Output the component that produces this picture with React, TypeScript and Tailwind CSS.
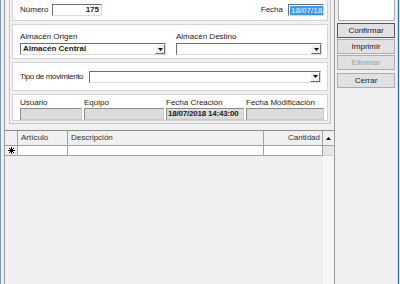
import React from "react";

function DropBtn() {
  return (
    <div className="h-full w-[10px] flex items-center justify-center bg-[#f0f0f0] border-t border-l border-t-white border-l-white border-r border-b border-r-[#6d6d6d] border-b-[#6d6d6d]">
      <svg width="5" height="3" viewBox="0 0 5 3">
        <path d="M0 0H5L2.5 3Z" fill="#000" />
      </svg>
    </div>
  );
}

function Combo({ className, text, bold }: { className: string; text?: string; bold?: boolean }) {
  return (
    <div className={"flex h-[12px] bg-white border border-t-[#6d6d6d] border-l-[#6d6d6d] border-r-[#dcdcdc] border-b-[#dcdcdc] " + className}>
      <div className={"flex-1 pl-[2px] leading-[10px] " + (bold ? "font-bold" : "")}>{text}</div>
      <div className="h-full">
        <DropBtn />
      </div>
    </div>
  );
}

function Field({ className, text }: { className: string; text?: string }) {
  return (
    <div className={"h-[12px] overflow-hidden bg-[#dcdcdc] border border-t-[#8a8a8a] border-l-[#8a8a8a] border-r-[#c8c8c8] border-b-[#c8c8c8] leading-[10px] pl-[1px] font-bold tracking-[-0.2px] " + className}>
      {text}
    </div>
  );
}

function Btn({ label, disabled, def }: { label: string; disabled?: boolean; def?: boolean }) {
  return (
    <div
      className={
        "h-[15px] w-[58px] flex items-center justify-center bg-[#e1e1e1] border " +
        (def ? "border-[#5a5a5a] " : "border-[#adadad] ") +
        (disabled ? "text-[#a0a0a0]" : "text-[#1a1a1a]")
      }
    >
      {label}
    </div>
  );
}

export default function App() {
  return (
    <div className="w-[400px] h-[284px] bg-[#f0f0f0] flex overflow-hidden whitespace-nowrap text-[8px] text-[#1a1a1a] font-['Liberation_Sans',Arial,sans-serif]">
      <div className="w-[1px] h-full bg-[#7d95ad]" />
      <div className="w-[3px] h-full bg-[#eef1f4]" />
      {/* left column */}
      <div className="w-[330px] h-full flex flex-col border-l border-[#9a9a9a]">
        {/* form frame */}
        <div className="h-[127px] pl-[4px]">
          <div className="w-[322px] h-[124px] border-x border-b border-[#c4c4c4] px-[2px] flex flex-col gap-[3px]">
            {/* panel 1 */}
            <div className="h-[21px] bg-white border-x border-b border-[#d4d4d4] flex items-center pl-[7px] pr-[3px]">
              <span className="w-[32px]">Número</span>
              <div className="w-[50px] h-[12px] border border-t-[#6d6d6d] border-l-[#6d6d6d] border-r-[#dcdcdc] border-b-[#dcdcdc] bg-white text-right pr-[2px] leading-[10px] font-bold">
                175
              </div>
              <div className="flex-1" />
              <span className="mr-[5px]">Fecha</span>
              <div className="w-[36px] h-[12px] border border-t-[#6d6d6d] border-l-[#6d6d6d] border-r-[#dcdcdc] border-b-[#dcdcdc] bg-white flex items-center pl-[1px]">
                <span className="bg-[#3399ff] text-white leading-[9px] px-[1px]">18/07/18</span>
              </div>
            </div>
            {/* panel 2 */}
            <div className="h-[35px] bg-white border border-[#d4d4d4] flex gap-[10px] pl-[7px] pt-[7px]">
              <div className="flex flex-col gap-[2px]">
                <span className="leading-[9px]">Almacén Origen</span>
                <Combo className="w-[146px]" text="Almacén Central" bold />
              </div>
              <div className="flex flex-col gap-[2px]">
                <span className="leading-[9px]">Almacén Destino</span>
                <Combo className="w-[146px]" />
              </div>
            </div>
            {/* panel 3 */}
            <div className="h-[29px] bg-white border border-[#d4d4d4] flex items-center pl-[7px]">
              <span className="w-[69px] tracking-[-0.35px]">Tipo de movimiento</span>
              <Combo className="w-[232px]" />
            </div>
            {/* panel 4 */}
            <div className="h-[27px] bg-white border border-[#d4d4d4] flex gap-[2px] pl-[7px] pt-[3px]">
              <div className="flex flex-col gap-[1px] w-[62px]">
                <span className="leading-[9px]">Usuario</span>
                <Field className="w-[62px]" />
              </div>
              <div className="flex flex-col gap-[1px] w-[80px]">
                <span className="leading-[9px]">Equipo</span>
                <Field className="w-[80px]" />
              </div>
              <div className="flex flex-col gap-[1px] w-[78px]">
                <span className="leading-[9px]">Fecha Creación</span>
                <Field className="w-[78px]" text="18/07/2018 14:43:00" />
              </div>
              <div className="flex flex-col gap-[1px] w-[78px]">
                <span className="leading-[9px]">Fecha Modificación</span>
                <Field className="w-[78px]" />
              </div>
            </div>
          </div>
        </div>
        {/* grid */}
        <div className="flex-1 border-t border-[#8c8c8c] mt-[3px] flex flex-col">
          <div className="h-[15px] flex border-b border-[#a0a0a0] text-[#333]">
            <div className="w-[13px] border-r border-[#a0a0a0]" />
            <div className="w-[50px] border-r border-[#a0a0a0] pl-[3px] flex items-center">Artículo</div>
            <div className="w-[196px] border-r border-[#a0a0a0] pl-[3px] flex items-center">Descripción</div>
            <div className="w-[59px] border-r border-[#a0a0a0] pr-[2px] flex items-center justify-end">Cantidad</div>
            <div className="w-[10px] flex items-center justify-center bg-[#f0f0f0]">
              <svg width="5" height="3" viewBox="0 0 5 3">
                <path d="M0 3H5L2.5 0Z" fill="#000" />
              </svg>
            </div>
          </div>
          <div className="flex-1 flex">
            <div className="w-[318px] flex flex-col">
              <div className="h-[10px] flex border-b border-[#a0a0a0]">
                <div className="w-[13px] border-r border-[#a0a0a0] flex items-center justify-center">
                  <svg width="7" height="7" viewBox="0 0 7 7">
                    <path d="M3.5 0V7M0 3.5H7M1 1L6 6M6 1L1 6" stroke="#000" strokeWidth="1" />
                  </svg>
                </div>
                <div className="w-[50px] border-r border-[#a0a0a0] bg-white" />
                <div className="w-[196px] border-r border-[#a0a0a0] bg-white" />
                <div className="w-[59px] border-r border-[#a0a0a0] bg-white" />
              </div>
            </div>
            <div className="w-[10px] bg-[#f7f7f7] flex flex-col">
              <div className="h-[10px] bg-[#e6e6e6] border-b border-[#d0d0d0]" />
            </div>
          </div>
        </div>
      </div>
      {/* right column */}
      <div className="w-[63px] h-full border-l border-[#9a9a9a] flex flex-col pl-[2px]">
        <div className="ml-[1px] w-[57px] h-[21px] bg-white border-x border-b border-[#adadad]" />
        <div className="mt-[2px] flex flex-col gap-[1px]">
          <Btn label="Confirmar" def />
          <Btn label="Imprimir" />
          <Btn label="Eliminar" disabled />
          <div className="h-[1px]" />
          <Btn label="Cerrar" />
        </div>
      </div>
      <div className="w-[1px] h-full bg-[#d8d8d8]" />
      <div className="w-[1px] h-full bg-[#1f73b3]" />
    </div>
  );
}
